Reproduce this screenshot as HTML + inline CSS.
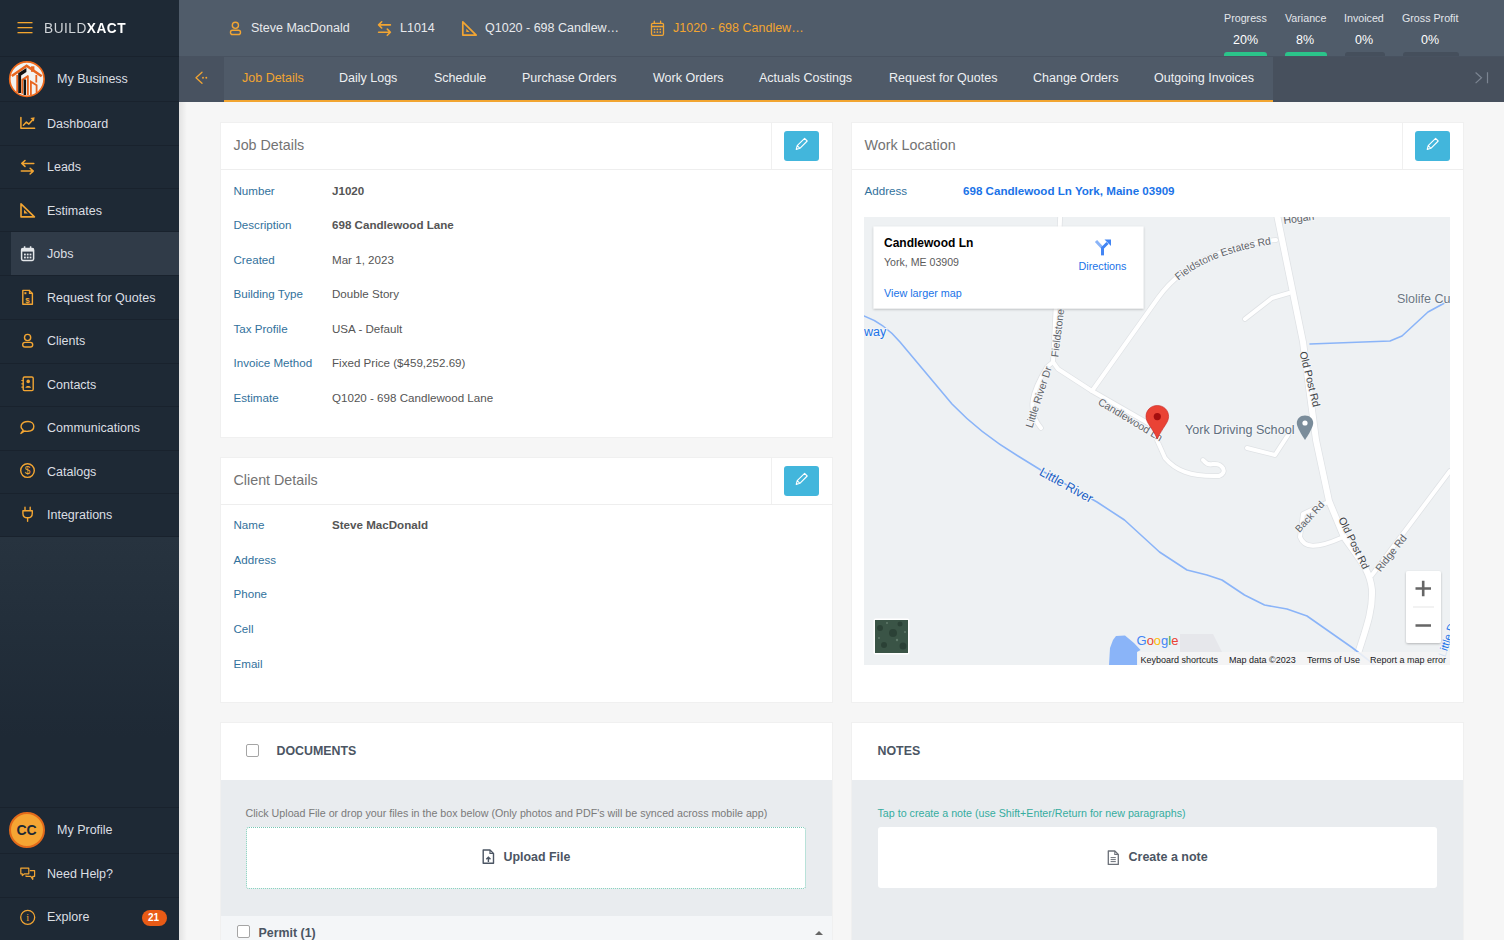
<!DOCTYPE html>
<html><head><meta charset="utf-8">
<style>
*{box-sizing:border-box;margin:0;padding:0}
html,body{width:1504px;height:940px;overflow:hidden}
body{font-family:"Liberation Sans",sans-serif;background:#f6f6f6;position:relative;color:#555}
.abs{position:absolute}
.t{position:absolute;white-space:nowrap;line-height:1}
/* sidebar */
#sb{position:absolute;left:0;top:0;width:179px;height:940px;background:#1e2935;z-index:5}
#sb .sep{position:absolute;left:0;width:179px;height:1px;background:#19222d}
#sb .lbl{position:absolute;left:47px;color:#dcdfe3;font-size:12.5px;line-height:1;white-space:nowrap}
#sb svg.ic{position:absolute;left:19px}
#hdr{position:absolute;left:179px;top:0;width:1325px;height:56px;background:#505c6a}
#tabs{position:absolute;left:179px;top:56px;width:1325px;height:46px;background:#4f5a68;border-top:1px solid #485260}
.tab{position:absolute;top:0;height:44px;color:#eef0f2;font-size:12.5px}
.card{position:absolute;background:#fff;border:1px solid #f0f0f0}
.ttl{position:absolute;font-size:14.3px;color:#737373;line-height:1;white-space:nowrap}
.hline{position:absolute;left:0;right:0;height:1px;background:#eeeeee}
.vline{position:absolute;width:1px;background:#f0f0f0}
.edit{position:absolute;width:35px;height:30px;background:#42b6dc;border-radius:3px}
.lab{position:absolute;left:13px;font-size:11.6px;color:#32719c;line-height:1;white-space:nowrap}
.val{position:absolute;left:111.5px;font-size:11.6px;color:#555;line-height:1;white-space:nowrap}
</style></head>
<body>
<div id="sb">
  <svg class="abs" style="left:17px;top:21px" width="16" height="13"><rect x="0.5" y="1" width="15" height="1.3" fill="#f4a52e"/><rect x="0.5" y="6" width="15" height="1.3" fill="#f4a52e"/><rect x="0.5" y="11" width="15" height="1.3" fill="#f4a52e"/></svg>
  <div class="t" style="left:44px;top:20px;font-size:15.5px;letter-spacing:0.6px;color:#d0d4d8;transform:scaleX(0.88);transform-origin:0 0">BUILD<b style="color:#fff">XACT</b></div>
  <div class="sep" style="top:56px"></div>
  <div class="sep" style="top:101px"></div>
  <div class="sep" style="top:145px"></div>
  <div class="sep" style="top:188px"></div>
  <div class="sep" style="top:231px"></div>
  <div class="abs" style="left:11px;top:232px;width:168px;height:43px;background:#303b48"></div>
  <div class="sep" style="top:275px"></div>
  <div class="sep" style="top:319px"></div>
  <div class="sep" style="top:363px"></div>
  <div class="sep" style="top:406px"></div>
  <div class="sep" style="top:450px"></div>
  <div class="sep" style="top:493px"></div>
  <div class="sep" style="top:536px"></div>
  <div class="abs" style="left:0;top:537px;width:179px;height:200px;background:linear-gradient(#27333f 0%,#232f3b 40%,#1e2935 100%)"></div>
  <div class="sep" style="top:807px"></div>
  <div class="sep" style="top:853px"></div>
  <div class="sep" style="top:897px"></div>
  <!-- my business logo -->
  <svg class="abs" style="left:0;top:0" width="50" height="100" viewBox="0 0 50 100">
    <circle cx="26.9" cy="79.1" r="17.2" fill="#f2f2f0" stroke="#ef6a1c" stroke-width="1.7"/>
    <path d="M11.8 76 L26.6 65.8 L41.7 76.3" fill="none" stroke="#e8651e" stroke-width="2.6"/>
    <rect x="31" y="66.3" width="3.4" height="5.5" fill="#e8651e"/>
    <path d="M36.3 75 V82.5 M17.2 75 V92.5 M27.9 75.5 V95 M30.9 95 V81.7 L36.6 85.2 V93.5" fill="none" stroke="#e8651e" stroke-width="1.8"/>
    <path d="M18.2 93 V73.2 L26.4 68 V72 L21.1 75.5 V93 Z" fill="#111"/>
    <path d="M21.4 93.7 V79.2 L27.8 75.1 V77.6 L23.2 80.6 V93.7 Z" fill="#e8651e"/>
    <rect x="23.6" y="79.5" width="2.5" height="15.5" fill="#111"/>
  </svg>
  <div class="lbl" style="left:57px;top:73px">My Business</div>
  <div class="lbl" style="top:118px">Dashboard</div>
  <div class="lbl" style="top:161px">Leads</div>
  <div class="lbl" style="top:205px">Estimates</div>
  <div class="lbl" style="top:248px">Jobs</div>
  <div class="lbl" style="top:292px">Request for Quotes</div>
  <div class="lbl" style="top:335px">Clients</div>
  <div class="lbl" style="top:379px">Contacts</div>
  <div class="lbl" style="top:422px">Communications</div>
  <div class="lbl" style="top:466px">Catalogs</div>
  <div class="lbl" style="top:509px">Integrations</div>
  <!-- profile -->
  <div class="abs" style="left:9px;top:812px;width:36px;height:36px;border-radius:50%;background:#f5a533;border:2px solid #e36a1a"></div>
  <div class="t" style="left:16.5px;top:823px;font-size:14px;font-weight:bold;color:#1e2935">CC</div>
  <div class="lbl" style="left:57px;top:824px">My Profile</div>
  <div class="lbl" style="top:868px">Need Help?</div>
  <div class="lbl" style="top:911px">Explore</div>
  <div class="abs" style="left:142px;top:910px;width:25px;height:16px;border-radius:8px;background:#e95b16"></div>
  <div class="t" style="left:148px;top:913px;font-size:10px;font-weight:bold;color:#fff">21</div>
</div>
<div class="abs" style="left:179px;top:102px;width:8px;height:838px;background:linear-gradient(90deg,rgba(0,0,0,0.08),rgba(0,0,0,0))"></div>

<div id="hdr">
  <div class="t" style="left:72px;top:22px;font-size:12.5px;color:#e8eaed">Steve MacDonald</div>
  <div class="t" style="left:221px;top:22px;font-size:12.5px;color:#e8eaed">L1014</div>
  <div class="t" style="left:306px;top:22px;font-size:12.5px;color:#e8eaed">Q1020 - 698 Candlew…</div>
  <div class="t" style="left:494px;top:22px;font-size:12.5px;color:#f2a531">J1020 - 698 Candlew…</div>

  <div class="t" style="left:1045px;top:13px;font-size:10.7px;color:#e3e6ea">Progress</div>
  <div class="t" style="left:1106px;top:13px;font-size:10.7px;color:#e3e6ea">Variance</div>
  <div class="t" style="left:1165px;top:13px;font-size:10.7px;color:#e3e6ea">Invoiced</div>
  <div class="t" style="left:1223px;top:13px;font-size:10.7px;color:#e3e6ea">Gross Profit</div>
  <div class="t" style="left:1054px;top:34px;font-size:12.5px;color:#fff">20%</div>
  <div class="t" style="left:1117px;top:34px;font-size:12.5px;color:#fff">8%</div>
  <div class="t" style="left:1176px;top:34px;font-size:12.5px;color:#fff">0%</div>
  <div class="t" style="left:1242px;top:34px;font-size:12.5px;color:#fff">0%</div>
  <div class="abs" style="left:1045px;top:52px;width:43px;height:4px;border-radius:3px 3px 0 0;background:#2bc48a"></div>
  <div class="abs" style="left:1106px;top:52px;width:42px;height:4px;border-radius:3px 3px 0 0;background:#2bc48a"></div>
  <div class="abs" style="left:1166px;top:52px;width:40px;height:4px;border-radius:3px 3px 0 0;background:#454f5c"></div>
  <div class="abs" style="left:1224px;top:52px;width:56px;height:4px;border-radius:3px 3px 0 0;background:#454f5c"></div>
</div>
<div id="tabs">
  <div class="abs" style="left:0;top:0;width:45px;height:45px;background:#485260"></div>
  <div class="abs" style="left:1094px;top:0;width:231px;height:45px;background:#47505d"></div>
  <div class="abs" style="left:45px;top:43px;width:1049px;height:2px;background:#f2a531"></div>
  <div class="t" style="left:63px;top:15px;font-size:12.5px;color:#f2a531">Job Details</div>
  <div class="t" style="left:160px;top:15px;font-size:12.5px;color:#eef0f2">Daily Logs</div>
  <div class="t" style="left:255px;top:15px;font-size:12.5px;color:#eef0f2">Schedule</div>
  <div class="t" style="left:343px;top:15px;font-size:12.5px;color:#eef0f2">Purchase Orders</div>
  <div class="t" style="left:474px;top:15px;font-size:12.5px;color:#eef0f2">Work Orders</div>
  <div class="t" style="left:580px;top:15px;font-size:12.5px;color:#eef0f2">Actuals Costings</div>
  <div class="t" style="left:710px;top:15px;font-size:12.5px;color:#eef0f2">Request for Quotes</div>
  <div class="t" style="left:854px;top:15px;font-size:12.5px;color:#eef0f2">Change Orders</div>
  <div class="t" style="left:975px;top:15px;font-size:12.5px;color:#eef0f2">Outgoing Invoices</div>
</div>

<!-- Job details card -->
<div class="card" style="left:219.5px;top:122px;width:613px;height:316px">
  <div class="ttl" style="left:13px;top:15px">Job Details</div>
  <div class="vline" style="left:550px;top:0;height:47px"></div>
  <div class="edit" style="left:563.5px;top:8px"><svg width="35" height="30" style="position:absolute;left:0;top:0"><path d="M12.2 18.4 L13.2 14.7 L20.6 7.4 L23.2 10 L15.9 17.3 Z M13.2 14.7 L15.9 17.3" fill="none" stroke="#fff" stroke-width="1.1" stroke-linejoin="round"/></svg></div>
  <div class="hline" style="top:46px"></div>
  <div class="lab" style="top:62px">Number</div><div class="val" style="top:62px;font-weight:bold">J1020</div>
  <div class="lab" style="top:96px">Description</div><div class="val" style="top:96px;font-weight:bold">698 Candlewood Lane</div>
  <div class="lab" style="top:131px">Created</div><div class="val" style="top:131px">Mar 1, 2023</div>
  <div class="lab" style="top:165px">Building Type</div><div class="val" style="top:165px">Double Story</div>
  <div class="lab" style="top:200px">Tax Profile</div><div class="val" style="top:200px">USA - Default</div>
  <div class="lab" style="top:234px">Invoice Method</div><div class="val" style="top:234px">Fixed Price ($459,252.69)</div>
  <div class="lab" style="top:269px">Estimate</div><div class="val" style="top:269px">Q1020 - 698 Candlewood Lane</div>
</div>
<!-- client card -->
<div class="card" style="left:219.5px;top:457px;width:613px;height:246px">
  <div class="ttl" style="left:13px;top:15px">Client Details</div>
  <div class="vline" style="left:550px;top:0;height:46px"></div>
  <div class="edit" style="left:563.5px;top:8px"><svg width="35" height="30" style="position:absolute;left:0;top:0"><path d="M12.2 18.4 L13.2 14.7 L20.6 7.4 L23.2 10 L15.9 17.3 Z M13.2 14.7 L15.9 17.3" fill="none" stroke="#fff" stroke-width="1.1" stroke-linejoin="round"/></svg></div>
  <div class="hline" style="top:46px"></div>
  <div class="lab" style="top:61px">Name</div><div class="val" style="top:61px;font-weight:bold">Steve MacDonald</div>
  <div class="lab" style="top:95.6px">Address</div>
  <div class="lab" style="top:130.3px">Phone</div>
  <div class="lab" style="top:165px">Cell</div>
  <div class="lab" style="top:199.6px">Email</div>
</div>
<!-- documents -->
<div class="card" style="left:219.5px;top:721.5px;width:613px;height:230px;background:#e9ecef">
  <div class="abs" style="left:0;top:0;width:611px;height:57px;background:#fff"></div>
  <div class="abs" style="left:25px;top:21px;width:13px;height:13px;border:1px solid #a5a5a5;border-radius:2px;background:#fff"></div>
  <div class="t" style="left:56px;top:22px;font-size:12.4px;font-weight:bold;color:#4b5563">DOCUMENTS</div>
  <div class="t" style="left:25px;top:85px;font-size:10.7px;color:#7a7a7a">Click Upload File or drop your files in the box below (Only photos and PDF's will be synced across mobile app)</div>
  <div class="abs" style="left:25px;top:104px;width:560px;height:62px;border:1px dotted #74c6b3;border-radius:3px;background:#fff"></div>
  <svg class="abs" style="left:261px;top:126px" width="13" height="16"><path d="M1.2 1 H8 L11.5 4.5 V14.3 H1.2 Z" fill="none" stroke="#4b5563" stroke-width="1.4" stroke-linejoin="round"/><path d="M8 1 V4.5 H11.5" fill="none" stroke="#4b5563" stroke-width="1.2"/><path d="M6.4 13 V8.5 M4.3 10.3 L6.4 8.2 L8.5 10.3" fill="none" stroke="#4b5563" stroke-width="1.4"/></svg>
  <div class="t" style="left:283px;top:128px;font-size:12.4px;font-weight:bold;color:#4b5563">Upload File</div>
  <div class="abs" style="left:0;top:193px;width:611px;height:40px;background:#f4f6f8"></div>
  <div class="abs" style="left:16px;top:202px;width:13px;height:13px;border:1px solid #a5a5a5;border-radius:2px;background:#fff"></div>
  <div class="t" style="left:38px;top:204px;font-size:12.4px;font-weight:bold;color:#4b5563">Permit (1)</div>
  <svg class="abs" style="left:593px;top:207px" width="10" height="6"><path d="M1 5 L5 1 L9 5 Z" fill="#666"/></svg>
</div>
<!-- work location -->
<div class="card" style="left:850.5px;top:122px;width:613px;height:581px">
  <div class="ttl" style="left:13px;top:15px">Work Location</div>
  <div class="vline" style="left:550px;top:0;height:47px"></div>
  <div class="edit" style="left:563.5px;top:8px"><svg width="35" height="30" style="position:absolute;left:0;top:0"><path d="M12.2 18.4 L13.2 14.7 L20.6 7.4 L23.2 10 L15.9 17.3 Z M13.2 14.7 L15.9 17.3" fill="none" stroke="#fff" stroke-width="1.1" stroke-linejoin="round"/></svg></div>
  <div class="hline" style="top:46px"></div>
  <div class="lab" style="top:62px">Address</div>
  <div class="val" style="top:62px;font-weight:bold;color:#1a73e8">698 Candlewood Ln York, Maine 03909</div>
  <div class="abs" id="map" style="left:12.5px;top:94px;width:586px;height:448px;overflow:hidden"><svg width="586" height="448" viewBox="864 217 586 448" style="position:absolute;left:0;top:0;font-family:'Liberation Sans',sans-serif">
<rect x="864" y="217" width="586" height="448" fill="#eef1f3"/>
<g fill="none" stroke-linecap="round" stroke-linejoin="round">
 <g stroke="#dfe2e5" stroke-width="5.5">
  <path d="M1060.5 210 L1053 362 L1047 367 C1032 392 1026 410 1041 428"/>
  <path d="M1053 362 L1058 369 L1092 391 L1160 430"/>
  <path d="M1092 391 L1158 298 C1178 270 1212 247 1276 240"/>
  <path d="M1289 293 L1272 298 L1245 319"/>
  <path d="M1157 440 L1165 458 C1175 470 1190 477 1219 476 C1228 473 1223 463 1213 464 C1206 466 1204 460 1203 460"/>
  <path d="M1247 448 L1275 455 L1288 435"/>
  <path d="M1326 503 L1303 514 L1300 537 C1304 548 1316 549 1341 538"/>
  <path d="M1372 575 L1450 471"/>
 </g>
 <g stroke="#dfe2e5" stroke-width="7.5">
  <path d="M1275 205 L1303 342 L1312 410 L1316 440 L1329 501 L1344 537 C1360 560 1370 570 1372 590 C1373 615 1363 635 1353 670"/>
 </g>
 <g stroke="#ffffff" stroke-width="4">
  <path d="M1060.5 210 L1053 362 L1047 367 C1032 392 1026 410 1041 428"/>
  <path d="M1053 362 L1058 369 L1092 391 L1160 430"/>
  <path d="M1092 391 L1158 298 C1178 270 1212 247 1276 240"/>
  <path d="M1289 293 L1272 298 L1245 319"/>
  <path d="M1157 440 L1165 458 C1175 470 1190 477 1219 476 C1228 473 1223 463 1213 464 C1206 466 1204 460 1203 460"/>
  <path d="M1247 448 L1275 455 L1288 435"/>
  <path d="M1326 503 L1303 514 L1300 537 C1304 548 1316 549 1341 538"/>
  <path d="M1372 575 L1450 471"/>
 </g>
 <g stroke="#ffffff" stroke-width="6">
  <path d="M1275 205 L1303 342 L1312 410 L1316 440 L1329 501 L1344 537 C1360 560 1370 570 1372 590 C1373 615 1363 635 1353 670"/>
 </g>
 <g stroke="#8ab4f8" stroke-width="1.6">
  <path d="M864 316 C878 321 889 329 900 342 L952 404 C975 428 998 444 1018 456 L1044 472 L1097 502 L1124.5 520 L1159.5 552 L1187 570 L1207 575 L1222 580 L1244.5 595 L1264.5 605 L1287 609 L1307 616 L1352 647.5 L1367 659 L1374 665"/>
  <path d="M1310 344 L1390 341 L1402 336 L1428 312 L1450 300"/>
 </g>
</g>
<g fill="#5f6368" font-size="10" stroke="#f3f5f7" stroke-width="2.2" paint-order="stroke" stroke-linejoin="round">
 <path id="fer" d="M1140 330 L1158 298 C1178 270 1212 247 1290 238" fill="none" stroke="none"/><text dy="3.7" font-size="10.5"><textPath href="#fer" startOffset="62%" text-anchor="middle">Fieldstone Estates Rd</textPath></text>
 <text dy="3.7" transform="translate(1057.5 333) rotate(-83)" text-anchor="middle" font-size="10.5">Fieldstone</text>
 <text dy="3.7" transform="translate(1038.5 397) rotate(-72)" text-anchor="middle" font-size="10.5">Little River Dr</text>
 <text dy="3.7" transform="translate(1130.5 419.5) rotate(31)" text-anchor="middle" font-size="10.5">Candlewood Ln</text>
 <text dy="3.7" transform="translate(1310 379) rotate(76)" text-anchor="middle" font-size="10.5" fill="#3c4043">Old Post Rd</text>
 <text dy="3.7" transform="translate(1354 543) rotate(64)" text-anchor="middle" font-size="10.5" fill="#3c4043">Old Post Rd</text>
 <text dy="3.7" transform="translate(1309.5 516.5) rotate(-48)" text-anchor="middle" font-size="10">Back Rd</text>
 <text dy="3.7" transform="translate(1391 553) rotate(-52)" text-anchor="middle" font-size="10.5">Ridge Rd</text>
 <text x="1284" y="224" font-size="10.5" transform="rotate(-8 1284 224)">Hogan</text>
 <text x="1397" y="303" font-size="12.5" fill="#6b7783">Slolife Cu</text>
 <text x="1185" y="434" font-size="12.6" fill="#5f6f7e">York Driving School</text>
 <text x="864" y="336" font-size="12.5" fill="#1a73e8">way</text>
 <text dy="3.7" transform="translate(1066 485.5) rotate(29)" text-anchor="middle" font-size="12.5" fill="#1a5fc4">Little River</text>
 <text dy="3.7" transform="translate(1447 640) rotate(-72)" text-anchor="middle" font-size="11" fill="#1a73e8">Little D</text>
</g>
<!-- POI icon -->
<path d="M1305 415.5 C1300 415.5 1296.8 419 1296.8 423 C1296.8 428 1305 440 1305 440 C1305 440 1313.2 428 1313.2 423 C1313.2 419 1310 415.5 1305 415.5 Z" fill="#7a8c9a"/>
<circle cx="1305" cy="423" r="2.6" fill="#fff"/>
<!-- marker -->
<path d="M1157.3 405.5 C1150.5 405.5 1146 410.5 1146 416.5 C1146 423 1152 427 1157.3 439 C1162.6 427 1168.6 423 1168.6 416.5 C1168.6 410.5 1164 405.5 1157.3 405.5 Z" fill="#ea4335" stroke="#c5221f" stroke-width="0.6"/>
<circle cx="1157.3" cy="416.6" r="3.6" fill="#a50e0e"/>
<!-- lake -->
<path d="M1109 665 L1110 648 L1113 640 L1116 636 L1125 635.5 L1134 643 L1140.6 650 L1137 652 L1137 665 Z" fill="#8ab4f8"/>
<!-- google logo bg -->
<path d="M1180 634 L1213 634 L1222 652 L1180 652 Z" fill="#e3e5e8" opacity="0.8"/>
<text x="1136.5" y="645.2" font-size="13"><tspan fill="#4285f4">G</tspan><tspan fill="#ea4335">o</tspan><tspan fill="#fbbc05">o</tspan><tspan fill="#4285f4">g</tspan><tspan fill="#34a853">l</tspan><tspan fill="#ea4335">e</tspan></text>
<rect x="1138" y="652" width="312" height="13" fill="#f5f5f5" opacity="0.85"/>
<g font-size="9" fill="#202124">
 <text x="1140.5" y="662.5">Keyboard shortcuts</text>
 <text x="1229" y="662.5">Map data ©2023</text>
 <text x="1307" y="662.5">Terms of Use</text>
 <text x="1370" y="662.5">Report a map error</text>
</g>
<!-- satellite -->
<rect x="873.5" y="618.5" width="36" height="36" rx="2" fill="#fff"/>
<rect x="875" y="620" width="33" height="33" fill="#3a5446"/>
<g fill="#2a4035" opacity="0.9"><circle cx="880" cy="628" r="3"/><circle cx="893" cy="633" r="4"/><circle cx="903" cy="646" r="3.5"/><circle cx="884" cy="645" r="3"/><circle cx="900" cy="624" r="2.5"/></g>
<g fill="#6f8a7a" opacity="0.7"><circle cx="887" cy="623" r="1"/><circle cx="897" cy="640" r="1.2"/><circle cx="879" cy="638" r="0.9"/><circle cx="905" cy="632" r="1"/></g>
<!-- zoom control -->
<rect x="1406" y="571" width="35" height="72" rx="2" fill="#fff" filter="url(#sh)"/>
<rect x="1413" y="606.5" width="21" height="1" fill="#e6e6e6"/>
<path d="M1415.5 588.5 H1431 M1423.2 580.8 V596.2 M1415.5 625.5 H1431" stroke="#666" stroke-width="2.6"/>
<!-- info window -->
<defs><filter id="sh" x="-10%" y="-10%" width="120%" height="130%"><feDropShadow dx="0" dy="1" stdDeviation="1" flood-color="#000" flood-opacity="0.25"/></filter></defs>
<rect x="873.5" y="226.5" width="270" height="82" fill="#fff" filter="url(#sh)"/>
<text x="884" y="247.3" font-size="12" font-weight="bold" fill="#000">Candlewood Ln</text>
<text x="884" y="265.8" font-size="10.6" fill="#5b5b5b">York, ME 03909</text>
<text x="884" y="296.9" font-size="10.8" fill="#1a73e8">View larger map</text>
<text x="1078.5" y="270" font-size="10.8" fill="#1a73e8">Directions</text>
<path d="M1102.5 255.3 V248 L1096 241" stroke="#8ab4f8" stroke-width="3" fill="none"/>
<path d="M1102.5 255.3 V248 L1107.5 243" stroke="#4285f4" stroke-width="3" fill="none"/>
<path d="M1104.5 239.5 L1111 239.5 L1111 246 Z" fill="#4285f4"/>
</svg></div>
</div>
<!-- notes -->
<div class="card" style="left:850.5px;top:721.5px;width:613px;height:230px;background:#e9ecef">
  <div class="abs" style="left:0;top:0;width:611px;height:57px;background:#fff"></div>
  <div class="t" style="left:26px;top:22px;font-size:12.4px;font-weight:bold;color:#4b5563">NOTES</div>
  <div class="t" style="left:26px;top:85px;font-size:10.7px;color:#36ad9f">Tap to create a note (use Shift+Enter/Return for new paragraphs)</div>
  <div class="abs" style="left:26px;top:104px;width:559px;height:61px;border-radius:3px;background:#fff"></div>
  <svg class="abs" style="left:255px;top:127px" width="13" height="16"><path d="M1.3 1 H7.8 L11.3 4.5 V14.4 H1.3 Z" fill="none" stroke="#6b7078" stroke-width="1.3" stroke-linejoin="round"/><path d="M7.8 1 V4.5 H11.3" fill="none" stroke="#6b7078" stroke-width="1.1"/><path d="M3.6 7.6 H8.8 M3.6 9.6 H8.8 M3.6 11.6 H8.8" stroke="#6b7078" stroke-width="1"/></svg>
  <div class="t" style="left:277px;top:128.5px;font-size:12.5px;font-weight:bold;color:#4b5563">Create a note</div>
</div>

<svg class="abs" style="left:0;top:0;z-index:10;pointer-events:none" width="1504" height="940" viewBox="0 0 1504 940">
<g fill="none" stroke="#f2a533" stroke-width="1.5" stroke-linecap="round" stroke-linejoin="round">
  <!-- dashboard -->
  <path d="M20.9 117.6 V128.2 H34.6"/>
  <path d="M23.4 125.2 L26.4 122.1 L28.9 124.1 L32.6 120"/>
  <!-- leads -->
  <path d="M21.8 163.4 H33.8 M25 160.5 L21.8 163.4 L25 166.4"/>
  <path d="M21.3 171.1 H33.3 M30.1 168.2 L33.3 171.1 L30.1 174"/>
  <!-- estimates -->
  <path d="M21 203.9 V216.9 H34.4 Z" stroke-width="1.6"/>
  <!-- rfq -->
  <path d="M22.8 290.4 H29.4 L32.4 293.4 V304.3 H22.8 Z" stroke-width="1.4"/>
  <path d="M29.4 290.4 V293.4 H32.4" stroke-width="1.1"/>
  <!-- clients -->
  <circle cx="27.6" cy="337.5" r="3.1" stroke-width="1.4"/>
  <rect x="22.7" y="342.4" width="10" height="4.6" rx="2.3" stroke-width="1.4"/>
  <!-- contacts -->
  <rect x="23.2" y="377" width="10" height="13.6" rx="1.3" stroke-width="1.4"/>
  <path d="M21.8 380.5 H23 M21.8 383.8 H23 M21.8 387.1 H23" stroke-width="1.2"/>
  <!-- communications -->
  <path d="M23.3 430.2 C19.5 427.5 20.5 421.5 28 421.5 C35.5 421.5 36 430.8 28 431.3 C26.5 431.4 25.5 431.3 24.6 431 L20.9 433.4 L23.3 430.2 Z" stroke-width="1.4"/>
  <!-- catalogs -->
  <circle cx="27.5" cy="470.6" r="6.8" stroke-width="1.4"/>
  <!-- integrations -->
  <path d="M25 507.3 V510.6 M30.2 507.3 V510.6 M27.6 517.8 V521.3" stroke-width="1.4"/>
  <path d="M22.9 510.8 H32.3 V513.2 C32.3 516.1 30.2 517.8 27.6 517.8 C25 517.8 22.9 516.1 22.9 513.2 Z" stroke-width="1.4"/>
  <!-- need help -->
  <path d="M20.8 868.2 H28.8 V873.8 H24.5 L22.3 875.6 V873.8 H20.8 Z" stroke-width="1.2"/>
  <path d="M26 875.8 V876.3 H30.8 L32.8 879.3 V876.3 H34.6 V870.6 H30.3" stroke-width="1.2"/>
  <!-- explore -->
  <circle cx="27.7" cy="917.3" r="7" stroke-width="1.3"/>
  <!-- header user -->
  <circle cx="235.4" cy="25.3" r="3.1" stroke-width="1.4"/>
  <rect x="230.5" y="30.2" width="10" height="4.3" rx="2.1" stroke-width="1.4"/>
  <!-- header arrows -->
  <path d="M378.6 24.9 H390.4 M381.7 21.8 L378.6 24.9 L381.7 28" stroke-width="1.6"/>
  <path d="M378.6 32.2 H390.4 M387.3 29.1 L390.4 32.2 L387.3 35.3" stroke-width="1.6"/>
  <!-- header set square -->
  <path d="M462.8 21.9 V35.1 H476.2 Z" stroke-width="1.7"/>
  <!-- header calendar -->
  <rect x="651.5" y="23.3" width="12" height="12" rx="1.3" stroke-width="1.3"/>
  <path d="M651.5 26.5 H663.5 M654.3 21.2 V23.3 M660.6 21.2 V23.3" stroke-width="1.3"/>
  <!-- back arrow -->
  <path d="M202 72.2 L196 77.7 L202 83.2" stroke-width="1.3"/>
</g>
<g fill="#f2a533">
  <path d="M34.6 117.3 L30.4 118 L33.9 121.6 Z"/>
  <path d="M24 209.8 V213.6 H27.8 Z"/>
  <rect x="24.4" y="292.2" width="2" height="2"/>
  <text x="27.6" y="303" font-size="8" font-family="Liberation Sans" text-anchor="middle" font-weight="bold">$</text>
  <circle cx="28.2" cy="381.4" r="1.8"/>
  <path d="M25.4 387.8 C25.6 385.3 30.8 385.3 31 387.8 Z"/>
  <text x="27.5" y="474.2" font-size="10" font-family="Liberation Sans" text-anchor="middle">$</text>
  <text x="27.7" y="921.4" font-size="10.5" font-family="Liberation Serif" text-anchor="middle">i</text>
  <path d="M466.3 28.8 V32.1 H469.6 Z"/>
  <circle cx="654.5" cy="29.3" r="0.9"/><circle cx="657.4" cy="29.3" r="0.9"/><circle cx="660.3" cy="29.3" r="0.9"/>
  <circle cx="654.5" cy="32.1" r="0.9"/><circle cx="657.4" cy="32.1" r="0.9"/><circle cx="660.3" cy="32.1" r="0.9"/>
  <circle cx="203" cy="77.7" r="0.95"/><circle cx="206.3" cy="77.7" r="0.95"/>
</g>
<!-- jobs calendar white -->
<g fill="none" stroke="#e4e7ea" stroke-width="1.5">
  <rect x="21.6" y="248.6" width="12" height="11.8" rx="1.4"/>
  <path d="M24.6 246.3 V249 M30.6 246.3 V249"/>
</g>
<g fill="#e4e7ea">
  <rect x="21.6" y="248.6" width="12" height="3"/>
  <rect x="24" y="253.6" width="1.8" height="1.8"/><rect x="26.8" y="253.6" width="1.8" height="1.8"/><rect x="29.6" y="253.6" width="1.8" height="1.8"/>
  <rect x="24" y="256.6" width="1.8" height="1.8"/><rect x="26.8" y="256.6" width="1.8" height="1.8"/><rect x="29.6" y="256.6" width="1.8" height="1.8"/>
</g>
<!-- right >| -->
<g fill="none" stroke="#7c8592" stroke-width="1.2">
  <path d="M1475.6 72.5 L1481.5 77.8 L1475.6 83.1 M1487.5 72.3 V83.3"/>
</g>
</svg>

</body></html>
